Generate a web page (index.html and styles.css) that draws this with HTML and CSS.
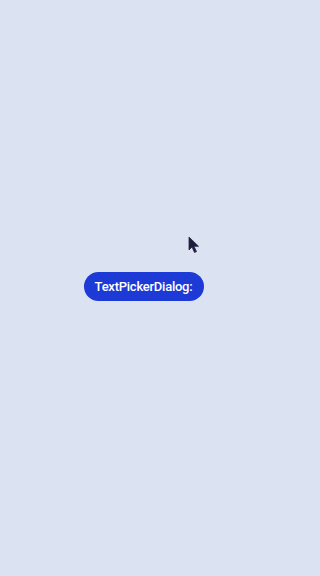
FILE: index.html
```html
<!DOCTYPE html>
<html>
<head>
<meta charset="utf-8">
<link rel="stylesheet" href="styles.css">
</head>
<body>
<main class="page">
  <button class="pill">TextPickerDialog:</button>
  <svg class="cursor" width="12" height="18" viewBox="0 0 12 18">
    <path d="M1 1 L1 14 L4 11 L6.5 16.5 L8.5 15.6 L6 10.3 L10.5 10.3 Z" fill="#1f1d3a" stroke="#2a2748" stroke-width="0.8" stroke-linejoin="round"/>
  </svg>
</main>
</body>
</html>
```
FILE: styles.css
```css
html, body {
  margin: 0;
  padding: 0;
}
body {
  background: #dbe3f3;
  font-family: Roboto, "Noto Sans", sans-serif;
}
.page {
  position: relative;
  width: 288px;
  height: 576px;
  display: flex;
  justify-content: center;
  align-items: flex-start;
  padding-top: 272px;
  box-sizing: border-box;
}
.pill {
  width: 120px;
  height: 29px;
  border: none;
  border-radius: 15px;
  background: #1d39d6;
  color: #ffffff;
  font-family: Roboto, "Noto Sans", sans-serif;
  font-weight: 500;
  font-size: 13px;
  letter-spacing: -0.25px;
  padding: 0;
  margin-left: -1px;
}
.cursor {
  position: absolute;
  left: 188px;
  top: 236px;
}
```
